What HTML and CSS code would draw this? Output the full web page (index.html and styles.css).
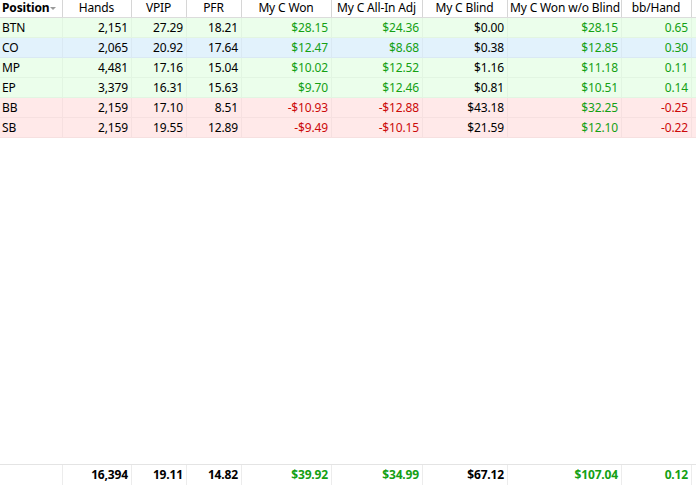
FILE: index.html
```html
<!DOCTYPE html>
<html>
<head>
<meta charset="utf-8">
<link rel="stylesheet" href="styles.css">
</head>
<body>
<div class="grid">
  <div class="row head">
    <div class="c l bold">Position<span class="sort"></span></div>
    <div class="c">Hands</div>
    <div class="c">VPIP</div>
    <div class="c">PFR</div>
    <div class="c">My C Won</div>
    <div class="c">My C All-In Adj</div>
    <div class="c">My C Blind</div>
    <div class="c">My C Won w/o Blind</div>
    <div class="c">bb/Hand</div>
    <div class="c end"></div>
  </div>
  <div class="row g">
    <div class="c l">BTN</div><div class="c">2,151</div><div class="c">27.29</div><div class="c">18.21</div>
    <div class="c pos">$28.15</div><div class="c pos">$24.36</div><div class="c">$0.00</div><div class="c pos">$28.15</div><div class="c pos">0.65</div><div class="c end"></div>
  </div>
  <div class="row b">
    <div class="c l">CO</div><div class="c">2,065</div><div class="c">20.92</div><div class="c">17.64</div>
    <div class="c pos">$12.47</div><div class="c pos">$8.68</div><div class="c">$0.38</div><div class="c pos">$12.85</div><div class="c pos">0.30</div><div class="c end"></div>
  </div>
  <div class="row g">
    <div class="c l">MP</div><div class="c">4,481</div><div class="c">17.16</div><div class="c">15.04</div>
    <div class="c pos">$10.02</div><div class="c pos">$12.52</div><div class="c">$1.16</div><div class="c pos">$11.18</div><div class="c pos">0.11</div><div class="c end"></div>
  </div>
  <div class="row g">
    <div class="c l">EP</div><div class="c">3,379</div><div class="c">16.31</div><div class="c">15.63</div>
    <div class="c pos">$9.70</div><div class="c pos">$12.46</div><div class="c">$0.81</div><div class="c pos">$10.51</div><div class="c pos">0.14</div><div class="c end"></div>
  </div>
  <div class="row r">
    <div class="c l">BB</div><div class="c">2,159</div><div class="c">17.10</div><div class="c">8.51</div>
    <div class="c neg">-$10.93</div><div class="c neg">-$12.88</div><div class="c">$43.18</div><div class="c pos">$32.25</div><div class="c neg">-0.25</div><div class="c end"></div>
  </div>
  <div class="row r">
    <div class="c l">SB</div><div class="c">2,159</div><div class="c">19.55</div><div class="c">12.89</div>
    <div class="c neg">-$9.49</div><div class="c neg">-$10.15</div><div class="c">$21.59</div><div class="c pos">$12.10</div><div class="c neg">-0.22</div><div class="c end"></div>
  </div>
  <div class="filler"></div>
  <div class="row foot">
    <div class="c l"></div><div class="c">16,394</div><div class="c">19.11</div><div class="c">14.82</div>
    <div class="c pos">$39.92</div><div class="c pos">$34.99</div><div class="c">$67.12</div><div class="c pos">$107.04</div><div class="c pos">0.12</div><div class="c end"></div>
  </div>
</div>
</body>
</html>
```
FILE: styles.css
```css
html, body {
  margin: 0;
  padding: 0;
  background: #fff;
}
body {
  font-family: "Noto Sans", "Open Sans", sans-serif;
  font-size: 12px;
  letter-spacing: -0.15px;
  color: #000;
}
.grid {
  display: flex;
  flex-direction: column;
  height: 485px;
  width: 696px;
  overflow: hidden;
}
.row {
  display: grid;
  grid-template-columns: 63px 69px 55px 55px 90px 91px 85px 114px 70px 4px;
  height: 20px;
  line-height: 19px;
  box-sizing: border-box;
  border-bottom: 1px solid rgba(0, 0, 0, 0.035);
}
.c {
  text-align: right;
  padding: 0 3px 0 2px;
  white-space: nowrap;
  overflow: hidden;
  border-right: 1px solid rgba(0, 0, 0, 0.035);
  box-sizing: border-box;
}
.c.l { text-align: left; }
.c.end { border-right: none; padding: 0; }
.head {
  height: 18px;
  line-height: 16px;
  border-bottom: 1px solid #dcdcdc;
  background: #fff;
}
.head .c {
  text-align: center;
  border-right: 1px solid #d6d6d6;
  color: #000;
}
.head .c.l { text-align: left; }
.head .c.end { border-right: none; }
.bold { font-weight: bold; }
.sort {
  display: inline-block;
  width: 0;
  height: 0;
  border-left: 3px solid transparent;
  border-right: 3px solid transparent;
  border-top: 3px solid #9a9a9a;
  vertical-align: middle;
  margin-left: 1px;
}
.g { background: #ebfeeb; }
.b { background: #e2f2fc; }
.r { background: #ffe9e9; }
.pos { color: #14a014; }
.neg { color: #cc0a0a; }
.filler { flex: 1; }
.foot {
  height: 21px;
  line-height: 20px;
  border-top: 1px solid #e4e4e4;
  border-bottom: none;
  font-weight: bold;
}
.foot .c { border-right: 1px solid #ececec; }
.foot .c.end { border-right: none; }
```
